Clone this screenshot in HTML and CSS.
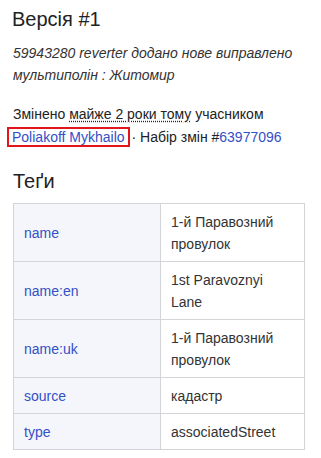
FILE: index.html
```html
<!DOCTYPE html>
<html lang="uk">

<head>
    <meta charset="UTF-8">
    <meta name="viewport" content="width=device-width, initial-scale=1.0">
    <title>Версія #1</title>
    <link rel="stylesheet" href="styles.css">
</head>

<body>
    <section class="version">
        <h2>Версія #1</h2>
        <p class="comment">59943280 reverter додано нове виправлено мультиполін : Житомир</p>
        <p class="meta">
            Змінено <span class="time" title="2023">майже 2 роки тому</span> учасником
            <a href="#" class="user">Poliakoff Mykhailo</a> · Набір змін #<a href="#">63977096</a>
        </p>
    </section>

    <section class="tags">
        <h3>Теґи</h3>
        <table>
            <tr>
                <th><a href="#">name</a></th>
                <td>1-й Паравозний провулок</td>
            </tr>
            <tr>
                <th><a href="#">name:en</a></th>
                <td>1st Paravoznyi Lane</td>
            </tr>
            <tr>
                <th><a href="#">name:uk</a></th>
                <td>1-й Паравозний провулок</td>
            </tr>
            <tr>
                <th><a href="#">source</a></th>
                <td>кадастр</td>
            </tr>
            <tr>
                <th><a href="#">type</a></th>
                <td>associatedStreet</td>
            </tr>
        </table>
    </section>
</body>

</html>
```

FILE: styles.css
```css
body {
    margin: 0;
    padding: 0 16px 0 13px;
    background-color: #fff;
    color: #222;
    font-family: "Liberation Sans", Arial, sans-serif;
    font-size: 14px;
}

a {
    color: #3350c6;
    text-decoration: none;
}

h2,
h3 {
    margin: 0;
    font-size: 20px;
    font-weight: normal;
    line-height: 24px;
}

.version h2 {
    padding-top: 7px;
    margin-left: -1px;
}

.comment {
    margin: 11px 0 0;
    font-style: italic;
    line-height: 22px;
    color: #333;
}

.meta {
    margin: 17px 0 0;
    line-height: 23px;
}

.time {
    text-decoration: underline dotted;
    text-underline-offset: 2px;
}

.user {
    margin-left: -6px;
    margin-right: -2px;
    padding: 0 3px;
    border: 2px solid #e2141c;
}

.tags h3 {
    margin-top: 20px;
}

table {
    margin-top: 10px;
    width: 100%;
    border-collapse: collapse;
    border: 1px solid #d2d4d8;
}

th,
td {
    border: 1px solid #d2d4d8;
    padding: 7px 10px 6px;
    line-height: 22px;
    text-align: left;
    vertical-align: middle;
}

th {
    width: 126px;
    font-weight: normal;
    background-color: #f4f6fc;
}

td {
    color: #333;
}
```
